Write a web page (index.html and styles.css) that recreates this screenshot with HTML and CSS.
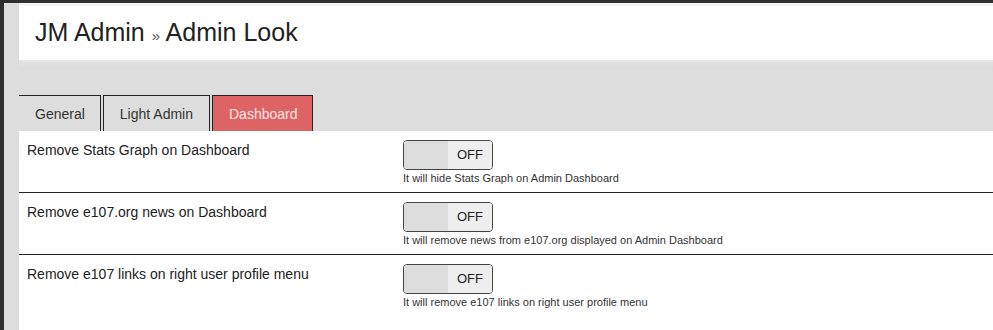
FILE: index.html
```html
<!DOCTYPE html>
<html lang="en">
<head>
    <meta charset="UTF-8">
    <title>JM Admin - Admin Look</title>
    <link rel="stylesheet" href="styles.css">
</head>
<body>
    <div class="page">
        <!-- Page title -->
        <header class="page-header">
            <h1>JM Admin <span class="crumb">&raquo;</span> Admin Look</h1>
        </header>

        <!-- Tabs -->
        <nav class="tabs">
            <a class="tab tab-first" href="#">General</a>
            <a class="tab" href="#">Light Admin</a>
            <a class="tab tab-active" href="#">Dashboard</a>
        </nav>

        <!-- Dashboard settings -->
        <section class="settings">
            <div class="setting-row">
                <div class="setting-label">Remove Stats Graph on Dashboard</div>
                <div class="setting-control">
                    <div class="toggle"><span class="toggle-knob"></span><span class="toggle-text">OFF</span></div>
                    <div class="help">It will hide Stats Graph on Admin Dashboard</div>
                </div>
            </div>
            <div class="setting-row">
                <div class="setting-label">Remove e107.org news on Dashboard</div>
                <div class="setting-control">
                    <div class="toggle"><span class="toggle-knob"></span><span class="toggle-text">OFF</span></div>
                    <div class="help">It will remove news from e107.org displayed on Admin Dashboard</div>
                </div>
            </div>
            <div class="setting-row setting-last">
                <div class="setting-label">Remove e107 links on right user profile menu</div>
                <div class="setting-control">
                    <div class="toggle"><span class="toggle-knob"></span><span class="toggle-text">OFF</span></div>
                    <div class="help">It will remove e107 links on right user profile menu</div>
                </div>
            </div>
        </section>
    </div>
</body>
</html>
```

FILE: styles.css
```css
/* Dark frame around the admin area */
body {
    margin: 0;
    padding: 3px 0 0 4px;
    background-color: #2f2f2f;
    font-family: 'Liberation Sans', Arial, sans-serif;
    color: #222;
    height: 327px;
    overflow: hidden;
}
.page {
    background-color: #dddddd;
    padding-left: 15px;
    height: 100%;
    display: flex;
    flex-direction: column;
}
/* Title block */
.page-header {
    background-color: #fff;
    border-top: 3px solid #f3f3f3;
    height: 54px;
    padding-left: 16px;
    display: flex;
    align-items: center;
}
.page-header h1 {
    margin: 0;
    font-size: 25px;
    font-weight: normal;
    color: #222;
    position: relative;
    top: -1px;
}
.crumb {
    font-size: 15px;
    color: #555;
}
/* Tabs row */
.tabs {
    display: flex;
    align-items: flex-end;
    gap: 2px;
    height: 71px;
    background: linear-gradient(#e6e6e6, #dddddd 6px);
}
.tab {
    display: block;
    height: 35px;
    line-height: 36px;
    padding: 0 16px;
    font-size: 14px;
    color: #333;
    text-decoration: none;
    border-top: 1px solid #222;
    border-left: 1px solid #222;
    border-right: 1px solid #222;
}
.tab-first {
    border-left: none;
    padding-right: 15px;
}
.tab-active {
    background-color: #dd6364;
    color: #fde6e6;
    padding-right: 15px;
}
/* Settings list */
.settings {
    background-color: #fff;
    flex: 1;
}
.setting-row {
    display: flex;
    height: 61px;
    border-bottom: 1px solid #222;
}
.setting-last {
    border-bottom: none;
}
.setting-label {
    width: 376px;
    padding: 11px 0 0 8px;
    font-size: 14px;
    color: #222;
}
.setting-control {
    padding-top: 9px;
}
/* Off switch */
.toggle {
    display: flex;
    width: 88px;
    height: 28px;
    border: 1px solid #444;
    border-radius: 4px;
    overflow: hidden;
}
.toggle-knob {
    width: 44px;
    background-color: #dcdcdc;
}
.toggle-text {
    flex: 1;
    background-color: #eeeeee;
    text-align: center;
    line-height: 28px;
    font-size: 13px;
    color: #222;
}
.help {
    margin-top: 2px;
    font-size: 11px;
    color: #333;
}
```
